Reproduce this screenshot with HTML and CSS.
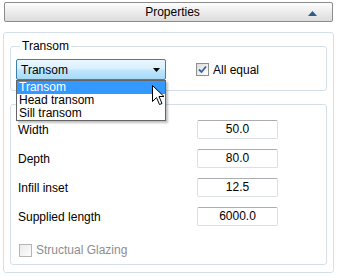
FILE: index.html
```html
<!DOCTYPE html>
<html lang="en">
<head>
    <meta charset="UTF-8">
    <title>Properties</title>
    <link rel="stylesheet" href="styles.css">
</head>
<body>
    <div class="header">
        <span class="header-title">Properties</span>
        <svg class="header-arrow" width="9" height="5" viewBox="0 0 9 5"><path d="M0 5 L4.5 0 L9 5 Z" fill="#2b5c8a"/></svg>
    </div>

    <div class="panel">
        <fieldset class="group">
            <legend>Transom</legend>
            <div class="combo-row">
                <div class="combo-wrap">
                    <div class="combo">
                        <span>Transom</span>
                        <svg width="7" height="4" viewBox="0 0 7 4"><path d="M0 0 L7 0 L3.5 4 Z" fill="#000"/></svg>
                    </div>
                    <ul class="combo-list">
                        <li class="selected">Transom</li>
                        <li>Head transom</li>
                        <li>Sill transom</li>
                    </ul>
                    <svg class="cursor" width="13" height="21" viewBox="0 0 13 21">
                        <path d="M0.5 0.5 L0.5 16.5 L4.5 12.5 L7.5 19.5 L10 18.5 L7 11.5 L12 11.5 Z" fill="#fff" stroke="#000" stroke-width="1"/>
                    </svg>
                </div>
                <label class="check">
                    <span class="box checked">
                        <svg width="9" height="9" viewBox="0 0 9 9"><path d="M1 4.5 L3.5 7 L8 1.5" fill="none" stroke="#3a5fa8" stroke-width="1.8"/></svg>
                    </span>
                    All equal
                </label>
            </div>
        </fieldset>

        <fieldset class="group fields">
            <div class="field"><span>Width</span><div class="value">50.0</div></div>
            <div class="field"><span>Depth</span><div class="value">80.0</div></div>
            <div class="field"><span>Infill inset</span><div class="value">12.5</div></div>
            <div class="field"><span>Supplied length</span><div class="value">6000.0</div></div>
            <label class="check disabled">
                <span class="box"></span>
                Structual Glazing
            </label>
        </fieldset>
    </div>
</body>
</html>
```

FILE: styles.css
```css
* {
    box-sizing: border-box;
}

body {
    margin: 0;
    background: #fff;
    font-family: "Liberation Sans", Arial, sans-serif;
    font-size: 12px;
    color: #000;
}

.header {
    margin: 2px 5px 0 4px;
    height: 20px;
    border: 1px solid #8c8c8c;
    border-radius: 2px;
    background: linear-gradient(#fdfdfd, #ececec 50%, #dcdcdc);
    display: flex;
    align-items: center;
    justify-content: center;
    position: relative;
}

.header-title {
    font-size: 12px;
    margin-left: 8px;
}

.header-arrow {
    position: absolute;
    right: 15px;
    top: 8px;
}

.panel {
    margin: 10px 4px 0 3px;
    height: 241px;
    border: 1px solid #d5dfe7;
    border-radius: 3px;
    padding: 7px 6px 0 6px;
    display: flex;
    flex-direction: column;
    gap: 13px;
}

.group {
    margin: 0;
    padding: 0 5px 10px 5px;
    border: 1px solid #d5dfe7;
    border-radius: 3px;
    min-width: 0;
}

.group legend {
    padding: 0 2px;
    margin-left: 4px;
    line-height: 13px;
}

.combo-row {
    display: flex;
    align-items: center;
    margin-top: 6px;
}

.combo-wrap {
    position: relative;
    width: 150px;
}

.combo {
    height: 21px;
    border: 1px solid #3c7fb1;
    border-radius: 2px;
    background: linear-gradient(#eaf6fd, #d9f0fc 45%, #bee6fd 55%, #a7d9f5);
    display: flex;
    align-items: center;
    justify-content: space-between;
    padding: 0 5px 0 4px;
}

.combo-list {
    position: absolute;
    top: 21px;
    left: 0;
    width: 150px;
    margin: 0;
    padding: 0;
    list-style: none;
    border: 1px solid #646464;
    background: #fff;
    box-shadow: 2px 2px 2px rgba(0, 0, 0, 0.25);
    z-index: 2;
}

.combo-list li {
    height: 13px;
    line-height: 13px;
    padding-left: 2px;
}

.combo-list li.selected {
    background: #3399ff;
    color: #fff;
}

.cursor {
    position: absolute;
    left: 136px;
    top: 26px;
    z-index: 3;
}

.check {
    display: flex;
    align-items: center;
    gap: 4px;
    margin-left: 30px;
}

.box {
    width: 13px;
    height: 13px;
    border: 1px solid #8f8f8f;
    background: linear-gradient(135deg, #dcdcdc, #fff);
    display: flex;
    align-items: center;
    justify-content: center;
}

.fields {
    padding: 15px 5px 7px 7px;
    flex: 1;
    margin-bottom: 9px;
    display: flex;
    flex-direction: column;
    gap: 10px;
}

.field {
    display: flex;
    align-items: center;
    justify-content: space-between;
    padding-right: 43px;
}

.value {
    width: 81px;
    height: 19px;
    border: 1px solid #dbdfe6;
    border-top-color: #abadb3;
    border-radius: 2px;
    text-align: center;
    line-height: 17px;
}

.check.disabled {
    margin: 7px 0 0 1px;
    color: #8d8d8d;
}

.check.disabled .box {
    border-color: #b5b5b5;
    background: linear-gradient(135deg, #ececec, #fbfbfb);
}
```
